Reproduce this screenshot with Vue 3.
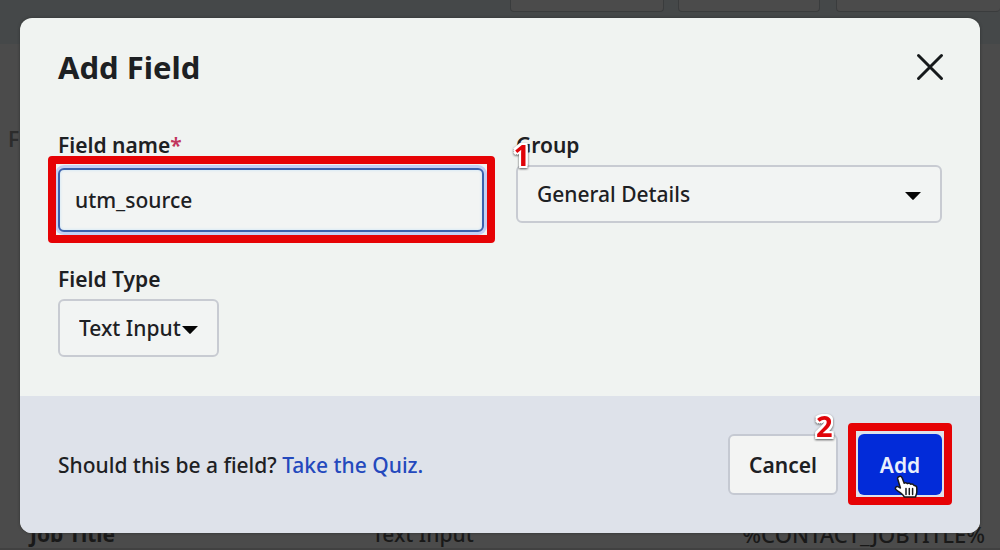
<script setup>
import { ref } from 'vue'

const fieldName = ref('utm_source')
const group = ref('General Details')
const fieldType = ref('Text Input')
</script>

<template>
  <div class="page">
    <div class="backdrop-page" aria-hidden="true">
      <div class="toolbar">
        <span class="tool tool-a"></span>
        <span class="tool tool-b"></span>
        <span class="tool tool-c"></span>
      </div>
      <div class="columns">F</div>
      <div class="row">
        <strong>Job Title</strong>
        <span>Text Input</span>
        <span class="tag">%CONTACT_JOBTITLE%</span>
      </div>
    </div>

    <form class="modal" role="dialog" aria-labelledby="dialog-title" @submit.prevent>
      <header class="head">
        <h1 id="dialog-title">Add Field</h1>
        <button type="button" class="close" aria-label="Close">
          <svg viewBox="0 0 28 28" width="28" height="28">
            <path d="M2.500 2.500 25.500 25.500M25.500 2.500 2.500 25.500" fill="none" stroke="#16191b" stroke-width="3" stroke-linecap="round" />
          </svg>
        </button>
      </header>

      <div class="body">
        <div class="field">
          <label for="field-name">Field name<span class="required">*</span></label>
          <div class="control focused">
            <input id="field-name" v-model="fieldName" type="text" />
            <span class="frame frame-input"><b class="step step-one">1</b></span>
          </div>
        </div>
        <div class="field">
          <label for="group">Group</label>
          <div class="control">
            <select id="group" v-model="group">
              <option>General Details</option>
            </select>
            <svg class="caret" viewBox="0 0 16 8" width="16" height="8"><path d="M0 0H16L8.700 7.600Q8 8.300 7.300 7.600Z" fill="#050505" /></svg>
          </div>
        </div>
        <div class="field type">
          <label for="field-type">Field Type</label>
          <div class="control">
            <select id="field-type" v-model="fieldType">
              <option>Text Input</option>
            </select>
            <svg class="caret" viewBox="0 0 16 8" width="16" height="8"><path d="M0 0H16L8.700 7.600Q8 8.300 7.300 7.600Z" fill="#050505" /></svg>
          </div>
        </div>
      </div>

      <footer class="foot">
        <p>Should this be a field? <a href="#quiz">Take the Quiz.</a></p>
        <button type="button" class="btn cancel">Cancel</button>
        <div class="control">
          <button type="submit" class="btn add">Add</button>
          <span class="frame frame-add"><b class="step step-two">2</b></span>
          <svg class="cursor" viewBox="0 0 24 24" width="24" height="24">
            <path d="M5.200 1.500C6.500 1 7.600 1.700 8.200 3L10.200 8.200C11 7.400 12.600 7.500 13.300 8.600C14.500 7.800 16 8.100 16.600 9.200C18 8.700 19.400 9.200 20 10.500C21.700 10.300 22.800 11.400 22.800 13V17C22.800 19 21.800 20 21.600 22H10.300C9.500 19.500 5.500 17.500 2 14.500C.5 12.700 2.200 10.900 4.400 11.900L6.400 13L3.700 4C3.400 2.900 4 1.900 5.200 1.500Z" fill="#fff" stroke="#17181d" stroke-width="1.500" stroke-linejoin="round" />
            <path d="M12 13.500V19.500M15.300 13.500V19.500M18.600 13.500V19.500" stroke="#17181d" stroke-width="1.500" fill="none" stroke-linecap="round" />
          </svg>
        </div>
      </footer>
    </form>
  </div>
</template>

<style>
body {
  background: #4b4b4b;
}
</style>

<style scoped>
.page {
  position: relative;
  min-height: 100vh;
  padding: 18px 20px 17px;
  box-sizing: border-box;
  overflow: hidden;
  background: #4b4b4b;
  color: #1d2023;
  font-family: "Noto Sans", "Open Sans", sans-serif;
  font-size: 21px;
  font-weight: 500;
}

.backdrop-page {
  position: absolute;
  inset: 0;
  display: flex;
  flex-direction: column;
  color: #191919;
}

.toolbar {
  display: flex;
  gap: 14px;
  height: 44px;
  padding-left: 510px;
  background: #454849;
}

.tool {
  height: 12px;
  box-sizing: border-box;
  border: 1px solid #3a3c3d;
  border-top: 0;
  border-radius: 0 0 4px 4px;
  background: #4b4b4b;
}

.tool-a {
  width: 154px;
}

.tool-b {
  width: 142px;
}

.tool-c {
  flex: 1;
  margin-left: 2px;
  border-right: 0;
}

.columns {
  padding: 80px 8px 0;
  line-height: 30px;
  color: #2c2c2c;
  font-weight: 600;
}

.row {
  display: grid;
  grid-template-columns: 342px 1fr auto;
  margin-top: auto;
  padding: 0 15px 0 30px;
  border-bottom: 2px solid #414141;
  line-height: 28px;
}

.tag {
  font-size: 22px;
}

.modal {
  position: relative;
  border-radius: 12px;
  overflow: hidden;
  background: #f0f3f1;
  box-shadow: 0 0 3px #2f3131;
}

.head {
  display: flex;
  align-items: center;
  justify-content: space-between;
  padding: 33px 36px 50px 38px;
}

h1 {
  margin: 0;
  font-size: 31px;
  line-height: 32px;
  font-weight: 700;
}

.close {
  display: flex;
  padding: 0;
  border: 0;
  background: none;
}

.body {
  display: grid;
  grid-template-columns: 1fr 1fr;
  gap: 35px 32px;
  padding: 0 38px 39px;
}

.field {
  display: flex;
  flex-direction: column;
  align-items: stretch;
  gap: 8px;
}

.type {
  align-items: flex-start;
}

label {
  line-height: 24px;
  font-weight: 600;
}

.required {
  color: #c1355c;
}

.control {
  position: relative;
}

.focused {
  z-index: 1;
  margin-top: 3px;
}

input,
select {
  display: block;
  width: 100%;
  box-sizing: border-box;
  margin: 0;
  border-radius: 6px;
  background: #f2f4f3;
  color: #1d2023;
  font: inherit;
  outline: 0;
}

input {
  height: 64px;
  padding: 0 15px;
  border: 2px solid #3c60ac;
  box-shadow: 0 0 0 3px #c3d0f5, inset 0 0 3px #c5e2f8;
}

select {
  height: 58px;
  padding: 0 19px;
  border: 2px solid #c8cbd2;
  appearance: none;
}

.type select {
  width: 161px;
}

.caret {
  position: absolute;
  top: 27px;
  right: 21px;
  pointer-events: none;
}

.frame {
  position: absolute;
  border: 8px solid #e60205;
  border-radius: 4px;
  pointer-events: none;
}

.frame-input {
  inset: -12px -11px -11px -10px;
}

.frame-add {
  inset: -11px -10px -10px;
}

.step {
  position: absolute;
  color: #e00409;
  font: 700 29px/30px "Noto Sans", sans-serif;
  text-shadow:
    -2px -2px 0 #fff, 0 -2px 0 #fff, 2px -2px 0 #fff,
    -2px 0 0 #fff, 2px 0 0 #fff,
    -2px 2px 0 #fff, 0 2px 0 #fff, 2px 2px 0 #fff;
  filter: drop-shadow(0 1px 1px #555);
}

.step-one {
  top: -24px;
  right: -43px;
}

.step-two {
  top: -20px;
  left: -40px;
}

.foot {
  display: flex;
  align-items: center;
  gap: 20px;
  padding: 38px;
  background: #dee2ea;
}

p {
  flex: 1;
  margin: 0;
  line-height: 28px;
}

a {
  color: #2449bd;
  text-decoration: none;
}

.btn {
  display: block;
  height: 61px;
  box-sizing: border-box;
  padding: 0;
  border-radius: 6px;
  font: inherit;
  font-weight: 600;
}

.cancel {
  width: 110px;
  border: 2px solid #c5c9d2;
  background: #f3f4f3;
  color: #1d2023;
}

.add {
  width: 84px;
  border: 0;
  background: #022bd9;
  color: #e9effc;
}

.cursor {
  position: absolute;
  left: 36px;
  top: 41px;
  pointer-events: none;
}
</style>
